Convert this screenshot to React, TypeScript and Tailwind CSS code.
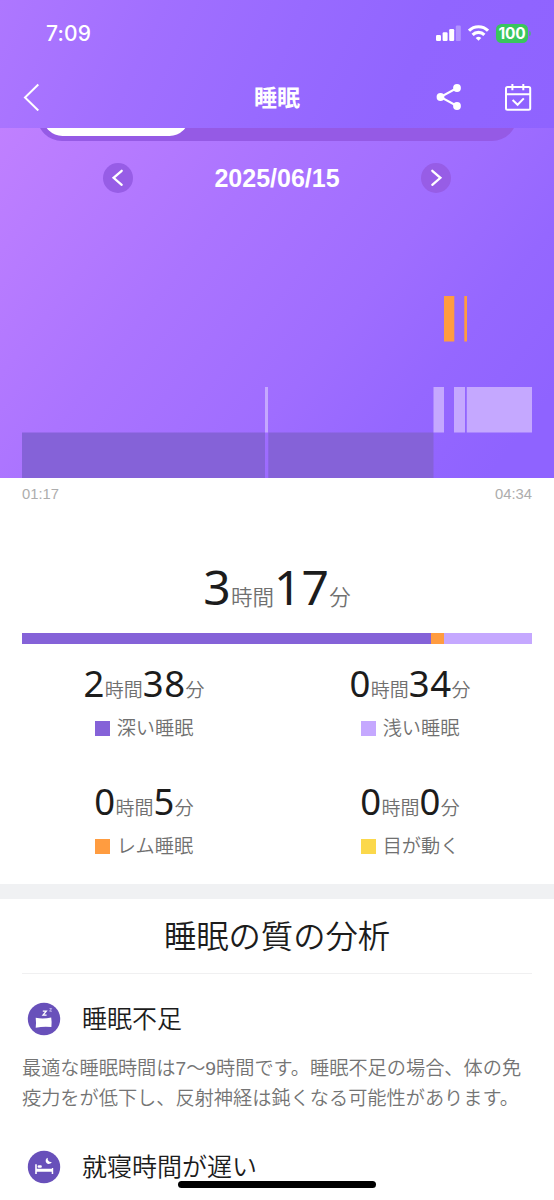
import React from "react";

const jp = "font-['Noto_Sans_CJK_JP',sans-serif]";

type Segment = { x: number; w: number; level: 0 | 1 | 2 };

const levelStyle = [
  { y: 136.5, color: "#8562d8" },
  { y: 91, color: "#c5a8ff" },
  { y: 0, color: "#ff9c40" },
];

const segments: Segment[] = [
  { x: 0, w: 243, level: 0 },
  { x: 243, w: 3, level: 1 },
  { x: 246.3, w: 165.2, level: 0 },
  { x: 411.5, w: 10.5, level: 1 },
  { x: 422, w: 10.3, level: 2 },
  { x: 432, w: 11, level: 1 },
  { x: 442.3, w: 2.7, level: 2 },
  { x: 444.8, w: 65.2, level: 1 },
];

function StatusBar() {
  return (
    <div className="flex h-[66px] items-center justify-between pr-[23px] pl-[46px]">
      <span className="font-['Inter',sans-serif] text-[21px] leading-none font-medium tracking-[0.2px]">7:09</span>
      <div className="flex items-center">
        <svg width="25" height="16" viewBox="0 0 25 16" fill="#fff">
          <rect x="0" y="10" width="5" height="6" rx="1.2" />
          <rect x="6.6" y="7.2" width="5" height="8.8" rx="1.2" />
          <rect x="13.2" y="4" width="5" height="12" rx="1.2" />
          <rect x="19.8" y="0.5" width="5" height="15.5" rx="1.2" opacity="0.3" />
        </svg>
        <svg className="ml-[7px]" width="21" height="16" viewBox="0 0 21 16" fill="none" stroke="#fff" strokeWidth="3.1">
          <path d="M1 5.7a13.5 13.5 0 0 1 19 0" />
          <path d="M4.6 9.8a8.4 8.4 0 0 1 11.8 0" />
          <path d="M10.5 15.8 7.7 13a4.1 4.1 0 0 1 5.6 0Z" fill="#fff" stroke="none" />
        </svg>
        <div className="ml-[7px] flex h-[19px] w-[32px] items-center justify-center rounded-[5.5px] bg-[#39c65d] pt-[1px] font-['Inter',sans-serif] text-[15.5px] leading-none font-bold tracking-[-0.2px]">
          100
        </div>
        <div className="ml-[1px] h-[5px] w-[2px] rounded-r-full bg-[#35c759]/60" />
      </div>
    </div>
  );
}

function NavBar() {
  return (
    <div className="grid h-[62px] grid-cols-[1fr_auto_1fr] items-center pr-[22px] pl-[22px]">
      <svg width="18" height="28" viewBox="0 0 18 28" fill="none" stroke="#fff" strokeWidth="2">
        <path d="M16.3 1.5 3 14.5l13.3 13" />
      </svg>
      <h1 className={`${jp} mb-[1px] text-[23px] leading-none font-bold`}>睡眠</h1>
      <div className="flex items-center justify-end">
        <svg width="26" height="28" viewBox="0 0 26 28" fill="#fff" stroke="#fff">
          <path d="M21 5 4.5 14 21 23" fill="none" strokeWidth="2" />
          <circle cx="21" cy="5" r="3.9" stroke="none" />
          <circle cx="4.5" cy="14" r="3.9" stroke="none" />
          <circle cx="21" cy="23" r="3.9" stroke="none" />
        </svg>
        <svg className="ml-[42px]" width="28" height="28" viewBox="0 0 28 28" fill="none" stroke="#fff" strokeWidth="2">
          <rect x="2" y="4" width="24.2" height="22.8" rx="1.5" />
          <path d="M2 11.2h24.2M8.4 1v6.2M19.3 1v6.2" />
          <path d="m8.6 17 5 4.8 6.2-6.4" />
        </svg>
      </div>
    </div>
  );
}

function RoundButton({ d }: { d: string }) {
  return (
    <button className="flex size-[30px] items-center justify-center rounded-full bg-[#975de6]">
      <svg width="30" height="30" viewBox="0 0 30 30" fill="none" stroke="#fff" strokeWidth="2.3" strokeLinecap="round">
        <path d={d} />
      </svg>
    </button>
  );
}

function Duration({ h, m, big = false }: { h: string; m: string; big?: boolean }) {
  const num = big ? "text-[48px] tracking-[0.2px]" : "text-[36.5px] tracking-[0.4px]";
  const unit = big ? "text-[21.5px]" : "text-[19px]";
  return (
    <div className={`${jp} flex items-baseline justify-center leading-none whitespace-nowrap text-[#1c1c1c]`}>
      <span className={`font-['Noto_Sans',sans-serif] font-[450] ${num}`}>{h}</span>
      <span className={`font-[350] text-[#707070] ${unit}`}>時間</span>
      <span className={`font-['Noto_Sans',sans-serif] font-[450] ${num}`}>{m}</span>
      <span className={`font-[350] text-[#707070] ${unit}`}>分</span>
    </div>
  );
}

function Stat({ h, m, color, label }: { h: string; m: string; color: string; label: string }) {
  return (
    <div className="flex h-[118px] flex-col items-center">
      <div className="h-[53px]">
        <Duration h={h} m={m} />
      </div>
      <div className="flex h-[20px] items-center gap-[7px]">
        <div className={`size-[15px] ${color}`} />
        <span className={`${jp} text-[19.2px] leading-none font-[350] text-[#707070]`}>{label}</span>
      </div>
    </div>
  );
}

function PillowIcon() {
  return (
    <svg className="shrink-0" width="34" height="34" viewBox="0 0 34 34">
      <circle cx="17" cy="17" r="16.2" fill="#6850ba" />
      <path d="M8.7 15.8q7.5 1.5 15.5-.3.8 4.7.2 9.6-7.5-1-15.7.7.6-5 0-10Z" fill="#fff" />
      <path d="M15.8 9.1h3.5l-3.3 4h3.6" fill="none" stroke="#fff" strokeWidth="1.3" />
      <path d="M22.5 6.6h2.1l-2 2.6h2.3" fill="none" stroke="#c9bff0" strokeWidth="0.9" />
    </svg>
  );
}

function BedIcon() {
  return (
    <svg className="shrink-0" width="34" height="34" viewBox="0 0 34 34">
      <circle cx="17" cy="17" r="16.2" fill="#6850ba" />
      <path d="M8.2 14.2h1.6v4.5h15.1V18h1.3v6h-1.5v-2.2H9.8V24H8.2Z" fill="#fff" />
      <rect x="10.6" y="15.3" width="4.2" height="2.4" rx="1" fill="#fff" />
      <path d="M20.8 7.7a3.2 3.2 0 1 0 4 4.2 3.3 3.3 0 0 1-4-4.2Z" fill="#fff" />
    </svg>
  );
}

export default function App() {
  return (
    <div className="relative flex h-[1200px] w-[554px] flex-col overflow-hidden bg-white">
      <header className="h-[128px] shrink-0 bg-[linear-gradient(115deg,#ae77ff_0%,#a16fff_27%,#986aff_50%,#9165ff_72%,#8f63ff_100%)] text-white">
        <StatusBar />
        <NavBar />
      </header>

      <section className="flex h-[350px] shrink-0 flex-col bg-[linear-gradient(128deg,#c080ff_0%,#ab74ff_35%,#9f6dff_60%,#9567ff_76%,#8f63ff_92%)] text-white">
        <div className="flex h-[13px] items-end justify-center overflow-hidden">
          <div className="h-[50px] w-[480px] shrink-0 rounded-[25px] bg-[#955ae5] p-[5.5px]">
            <div className="h-full w-[146px] rounded-[20px] bg-white" />
          </div>
        </div>
        <div className="mt-[22px] flex h-[30px] items-center justify-between px-[103px]">
          <RoundButton d="M18.7 7.8 10.6 14.8l8.1 7" />
          <span className="font-['Liberation_Sans',sans-serif] text-[25px] leading-none font-bold">2025/06/15</span>
          <RoundButton d="m11.3 7.8 8.1 7-8.1 7" />
        </div>
        <svg className="mx-[22px] mt-auto" width="510" height="182" viewBox="0 0 510 182">
          {segments.map((s) => (
            <rect key={s.x} x={s.x} y={levelStyle[s.level].y} width={s.w} height="45.5" fill={levelStyle[s.level].color} />
          ))}
        </svg>
      </section>

      <section className="flex h-[406px] shrink-0 flex-col px-[22px]">
        <div className="flex h-[30px] shrink-0 items-center justify-between pt-[2px] font-['Liberation_Sans',sans-serif] text-[14.8px] leading-none text-[#adadad]">
          <span>01:17</span>
          <span>04:34</span>
        </div>
        <div className="mt-[55px] h-[70px] shrink-0">
          <Duration h="3" m="17" big />
        </div>
        <div className="flex h-[10.5px] shrink-0">
          <div className="w-[409px] bg-[#8562d8]" />
          <div className="w-[13px] bg-[#ff9c40]" />
          <div className="flex-1 bg-[#c5a8ff]" />
        </div>
        <div className="-mx-[11px] mt-[21.5px] grid grid-cols-2">
          <Stat h="2" m="38" color="bg-[#8562d8]" label="深い睡眠" />
          <Stat h="0" m="34" color="bg-[#c5a8ff]" label="浅い睡眠" />
          <Stat h="0" m="5" color="bg-[#ff9c40]" label="レム睡眠" />
          <Stat h="0" m="0" color="bg-[#fbd84b]" label="目が動く" />
        </div>
      </section>

      <div className="h-[15px] shrink-0 bg-[#f0f1f3]" />

      <section className={`${jp} flex flex-col px-[22px]`}>
        <h2 className="flex h-[75px] items-center justify-center border-b-[1.5px] border-[#f0f0f1] pb-[4px] text-[32.3px] leading-none font-[350] text-[#1c1c1c]">
          睡眠の質の分析
        </h2>
        <div className="mt-[28px] flex h-[34px] items-center gap-[21px] pl-[5px]">
          <PillowIcon />
          <h3 className="mb-[4px] text-[25px] leading-none font-[350] text-[#1c1c1c]">睡眠不足</h3>
        </div>
        <p className="mt-[17px] text-[19.2px] leading-[29px] font-[350] whitespace-nowrap text-[#747474]">
          最適な睡眠時間は<span className="font-['Liberation_Sans',sans-serif]">7</span>〜<span className="font-['Liberation_Sans',sans-serif]">9</span>時間です。睡眠不足の場合、体の免
          <br />
          疫力をが低下し、反射神経は鈍くなる可能性があります。
        </p>
        <div className="mt-[38px] flex h-[34px] items-center gap-[21px] pl-[5px]">
          <BedIcon />
          <h3 className="mb-[4px] text-[25px] leading-none font-[350] text-[#1c1c1c]">就寝時間が遅い</h3>
        </div>
      </section>

      <div className="absolute bottom-[12px] left-[178px] h-[7px] w-[198px] rounded-full bg-black" />
    </div>
  );
}
